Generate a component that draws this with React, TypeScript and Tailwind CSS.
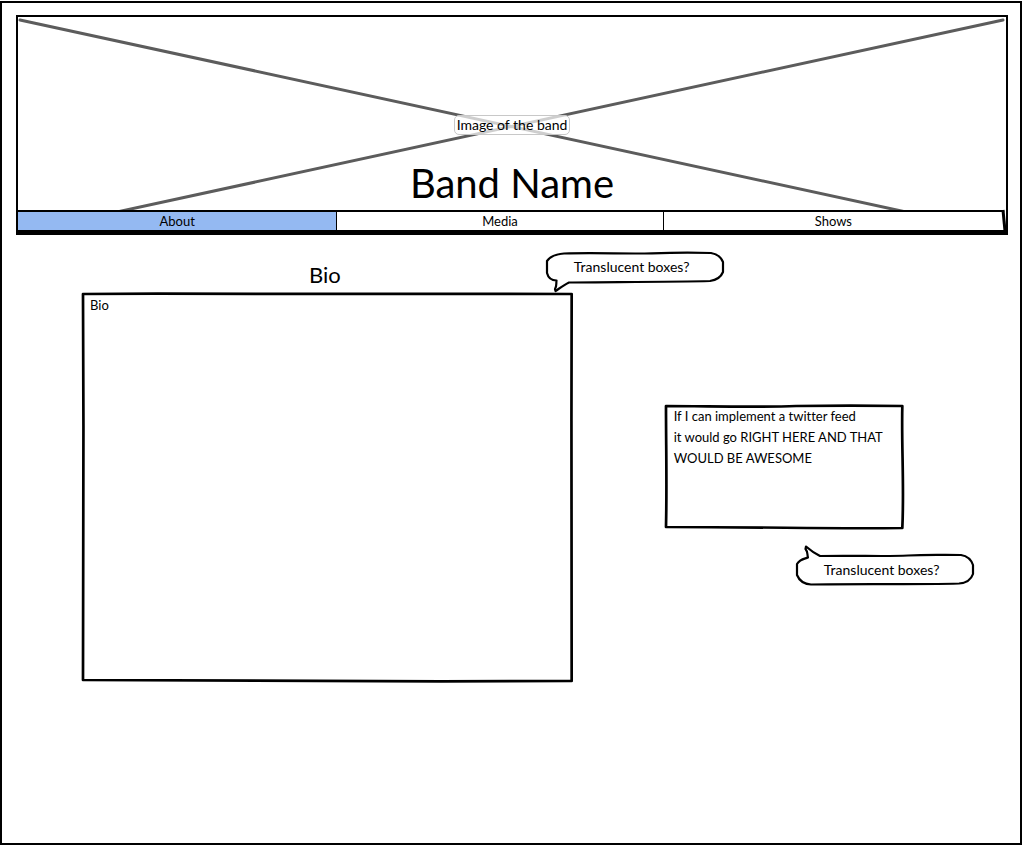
import type { ReactNode } from "react";

/* Hand-drawn outline that stretches with the box it decorates. */
function SketchOutline({ d, viewBox }: { d: string; viewBox: string }) {
  return (
    <svg
      aria-hidden="true"
      className="pointer-events-none absolute inset-0 h-full w-full overflow-visible"
      viewBox={viewBox}
      preserveAspectRatio="none"
      fill="none"
    >
      <path
        d={d}
        className="stroke-black stroke-[2.7px]"
        strokeLinejoin="round"
        strokeLinecap="round"
        vectorEffect="non-scaling-stroke"
      />
    </svg>
  );
}

const BALLOON_DOWN =
  "M18 2.5 C50 1.6 82 3 106 2.3 C130 1.5 144 1.4 165 2 C171 3 175 6 177 11 L177 21 C175 26 171 29 164 30 C130 31 60 31 23 31.500 C18 34 14 37 9.500 40 L9 38 C11 35 10 33 10.500 29.500 C5 29.500 2 26 1 22 L1 10 C4 6 10 3 18 2.500 Z";
const BALLOON_UP =
  "M24 2 C60 1.200 88 2.800 112 1.500 C130 .5 144 1 165 1 C171 2 175 5 177 11 L177 20 C175 26 170 29 163 29.500 C130 30.500 60 30 15 30.500 C8 30 3 26 1 21 L1 10 C4 5 8 5 12 3.500 C11 0 12 -2 9.500 -5 L10 -7.500 C14 -4 18 -1 24 2 Z";

function Balloon({ tail, className, children }: { tail: "up" | "down"; className: string; children: ReactNode }) {
  return (
    <div className={`absolute flex h-8 w-[178px] items-center justify-center ${className}`}>
      <svg
        aria-hidden="true"
        className="absolute inset-0 h-full w-full overflow-visible fill-white stroke-black stroke-[2.2px]"
        viewBox="0 0 178 32"
        strokeLinejoin="round"
      >
        <path d={tail === "down" ? BALLOON_DOWN : BALLOON_UP} />
      </svg>
      <p className="relative pr-1.5 text-[14px] leading-5">{children}</p>
    </div>
  );
}

export default function App() {
  return (
    <div className="flex min-h-screen bg-white pb-px pr-px pt-px font-[Lato,sans-serif] text-black [font-variant-ligatures:none]">
      <div className="flex-1 border-2 border-black pl-[14px] pr-3 pt-3">
        <header className="border-x-2 border-t-2 border-black">
          <div className="relative flex h-[193px] flex-col items-center overflow-hidden">
            <svg
              aria-hidden="true"
              className="absolute left-0 top-0 h-[216px] w-full"
              viewBox="0 0 988 216"
              preserveAspectRatio="none"
            >
              <path
                d="M2 3 L985 216 M985 3 L2 216"
                className="stroke-[#5c5c5c] stroke-[3px]"
                strokeLinecap="round"
                vectorEffect="non-scaling-stroke"
              />
            </svg>
            <p className="relative mt-[98px] rounded-[5px] border border-[#c8c8c8] bg-white/70 px-[2px] text-[14px] leading-[18px]">
              Image of the band
            </p>
            <h1 className="relative mt-6 text-[40px] leading-[48px]">Band Name</h1>
          </div>
          <nav className="relative flex h-[25px] border-b-[5px] border-t-2 border-black pr-[3px] text-[13px] leading-[18px]">
            <a href="#about" aria-current="page" className="flex-[319] bg-[#94b9f2] text-center">
              About
            </a>
            <a href="#media" className="flex-[326] border-x border-black text-center">
              Media
            </a>
            <a href="#shows" className="flex-[340] text-center">
              Shows
            </a>
            <svg aria-hidden="true" className="absolute right-0 top-0 h-5 w-1 overflow-visible" viewBox="0 0 4 20">
              <path d="M2 -2 L4 -2 L4 8 Z" fill="#fff" />
              <path d="M1 -2 L3 19" className="stroke-black stroke-[3px]" />
            </svg>
          </nav>
        </header>

        <main className="flex items-start gap-[94px] pl-[66px] pr-[105px] pt-7">
          <section className="relative flex-[489]">
            <h2 className="mb-[6px] pr-1 text-center text-[22px] leading-6">Bio</h2>
            <div className="relative h-[388px] px-2 py-[3px]">
              <SketchOutline
                viewBox="0 0 489 388"
                d="M1 1 C140 0 250 2 489 1 C488 130 490 250 489 388 C330 389 190 388 1 387 C1 250 2 130 1 1 Z"
              />
              <p className="text-[13px] leading-[18px]">Bio</p>
            </div>
            <Balloon tail="down" className="-right-[152px] -top-3">
              Translucent boxes?
            </Balloon>
          </section>

          <aside className="relative mt-[142px] flex-[237]">
            <div className="relative h-[124px] px-2 py-px">
              <SketchOutline
                viewBox="0 0 237 124"
                d="M0 1 C40 1 90 2.500 130 1 C170 .5 200 .5 236 1 C235 40 238 80 236 123 C160 124 110 122 0 122 C1 80 0 40 0 1 Z"
              />
              <p className="text-[13px] leading-[21px]">
                If I can implement a twitter feed
                <br />
                it would go RIGHT HERE AND THAT
                <br />
                WOULD BE AWESOME
              </p>
            </div>
            <Balloon tail="up" className="left-[130px] top-[149px]">
              Translucent boxes?
            </Balloon>
          </aside>
        </main>
      </div>
    </div>
  );
}
